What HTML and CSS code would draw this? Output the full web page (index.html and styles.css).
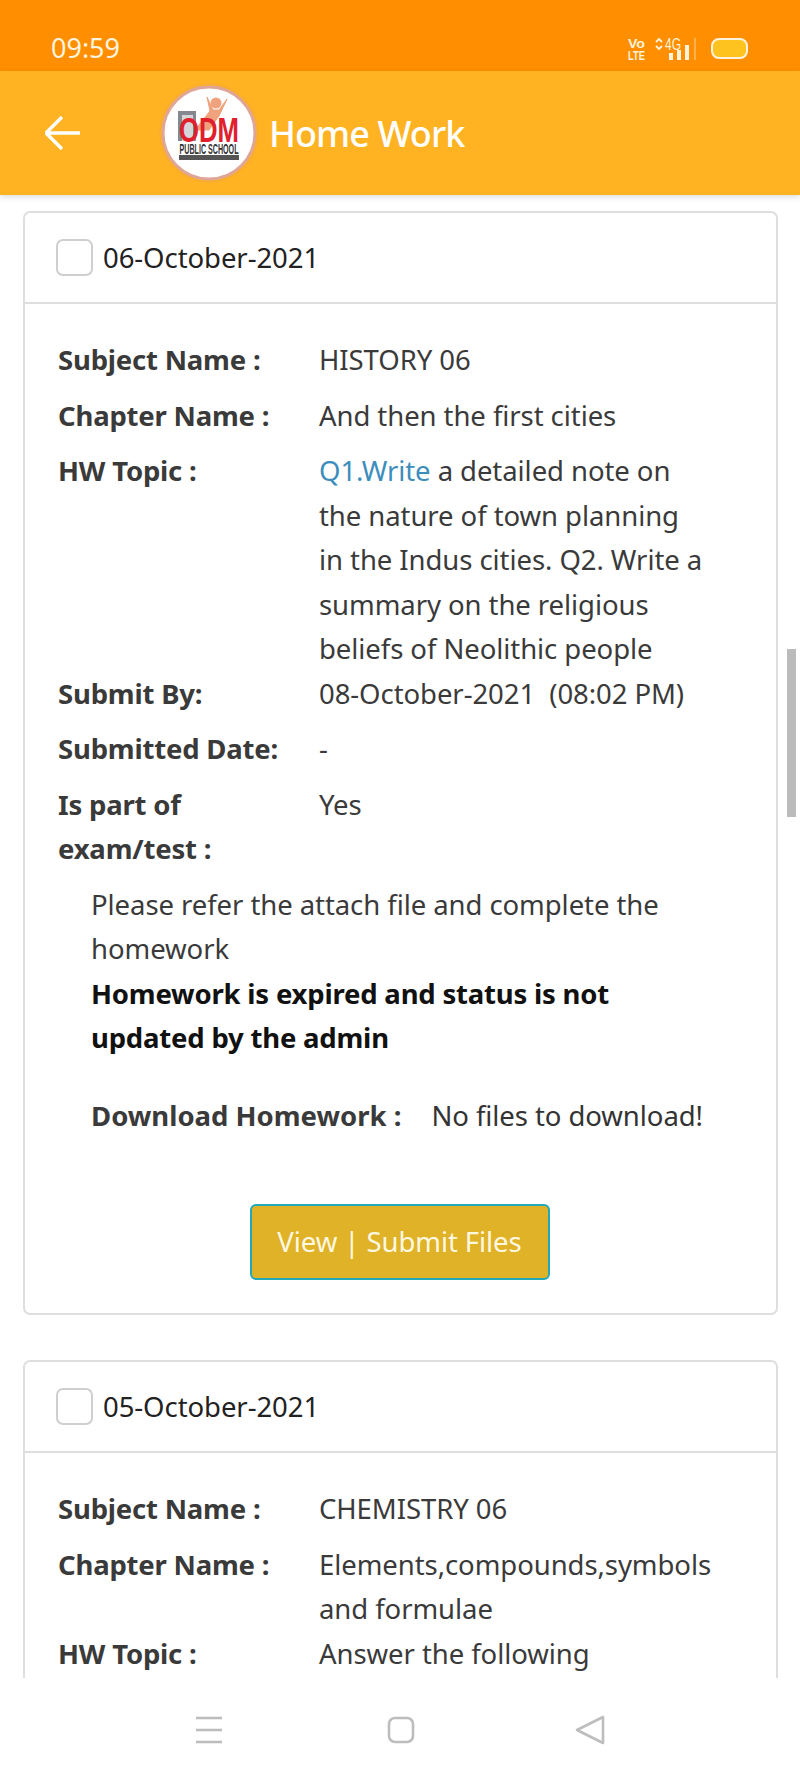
FILE: index.html
```html
<!DOCTYPE html>
<html lang="en">
<head>
<meta charset="utf-8">
<title>Home Work</title>
<link rel="stylesheet" href="styles.css">
</head>
<body>
<div class="phone">
  <div class="status">
    <span class="time">09:59</span>
    <svg class="status-icons" width="120" height="30" viewBox="0 0 120 30" aria-hidden="true">
      <text x="0" y="13" class="si-vo" textLength="17" lengthAdjust="spacingAndGlyphs">Vo</text>
      <text x="0" y="25" class="si-vo" textLength="17" lengthAdjust="spacingAndGlyphs">LTE</text>
      <path d="M28 7l3-3 3 3M28 11l3 3 3-3" fill="none" stroke="#fff3dd" stroke-width="1.8"/>
      <text x="37" y="15" class="si-4g" textLength="16" lengthAdjust="spacingAndGlyphs">4G</text>
      <rect x="41" y="18" width="4" height="7" fill="#fff3dd"/>
      <rect x="49" y="15" width="4" height="10" fill="#fff3dd"/>
      <rect x="57" y="10" width="4" height="15" fill="#fff3dd"/>
      <rect x="66" y="3" width="2" height="22" fill="#ffb04a"/>
      <rect x="84" y="4" width="35" height="19" rx="7" fill="#ffc31f" stroke="#fff3dd" stroke-width="2"/>
    </svg>
  </div>
  <header class="appbar">
    <svg class="back" width="36" height="36" viewBox="0 0 36 36" aria-hidden="true">
      <path d="M1 18H35M17 2L1 18L17 34" fill="none" stroke="#fff" stroke-width="3.4"/>
    </svg>
    <svg class="logo" width="100" height="100" viewBox="0 0 100 100" aria-hidden="true">
      <circle cx="50" cy="50" r="49" fill="none" stroke="#f5a93a" stroke-width="1"/>
      <circle cx="50" cy="50" r="46" fill="#fff" stroke="#dfa596" stroke-width="3"/>
      <rect x="19" y="28" width="18" height="30" fill="#85888f"/>
      <rect x="23" y="32" width="11" height="26" fill="#d5d6d8"/>
      <circle cx="57" cy="20" r="5.5" fill="#efa27c"/>
      <path d="M48 14L51 28L36 47H50L60 33L68 16L60 27H54Z" fill="#efa27c" stroke="#efa27c" stroke-width="1"/>
      <text x="50" y="59" class="logo-odm" textLength="60" lengthAdjust="spacingAndGlyphs">ODM</text>
      <text x="50" y="71" class="logo-pub" textLength="59" lengthAdjust="spacingAndGlyphs">PUBLIC SCHOOL</text>
      <rect x="20" y="72" width="60" height="5" fill="#555"/>
    </svg>
    <h1 class="title">Home Work</h1>
  </header>
  <main class="content">
    <section class="card">
      <div class="card-head"><span class="check"></span><span class="date">06-October-2021</span></div>
      <div class="card-body">
        <div class="row"><div class="label">Subject Name :</div><div class="value">HISTORY 06</div></div>
        <div class="row"><div class="label">Chapter Name :</div><div class="value">And then the first cities</div></div>
        <div class="row tight"><div class="label">HW Topic :</div><div class="value"><span class="link">Q1.Write</span> a detailed note on<br>the nature of town planning<br>in the Indus cities. Q2. Write a<br>summary on the religious<br>beliefs of Neolithic people</div></div>
        <div class="row"><div class="label">Submit By:</div><div class="value">08-October-2021&nbsp; (08:02 PM)</div></div>
        <div class="row"><div class="label">Submitted Date:</div><div class="value">-</div></div>
        <div class="row"><div class="label">Is part of<br>exam/test :</div><div class="value">Yes</div></div>
        <div class="note">
          <p class="note-text">Please refer the attach file and complete the<br>homework</p>
          <p class="note-strong">Homework is expired and status is not<br>updated by the admin</p>
          <p class="download"><span class="download-label">Download Homework :</span><span>No files to download!</span></p>
        </div>
        <div class="actions"><button class="btn" type="button">View | Submit Files</button></div>
      </div>
    </section>
    <section class="card">
      <div class="card-head"><span class="check"></span><span class="date">05-October-2021</span></div>
      <div class="card-body">
        <div class="row"><div class="label">Subject Name :</div><div class="value">CHEMISTRY 06</div></div>
        <div class="row tight"><div class="label">Chapter Name :</div><div class="value">Elements,compounds,symbols<br>and formulae</div></div>
        <div class="row"><div class="label">HW Topic :</div><div class="value">Answer the following</div></div>
      </div>
    </section>
  </main>
  <div class="scrollbar"></div>
  <nav class="navbar">
    <svg width="30" height="30" viewBox="0 0 30 30" class="nav-menu" aria-hidden="true"><path d="M2 3H28M2 15H28M2 27H28" stroke="#bdbdbd" stroke-width="2.6" fill="none"/></svg>
    <svg width="30" height="30" viewBox="0 0 30 30" class="nav-home" aria-hidden="true"><rect x="3" y="3" width="24" height="24" rx="6" stroke="#bdbdbd" stroke-width="2.6" fill="none"/></svg>
    <svg width="30" height="30" viewBox="0 0 30 30" class="nav-back" aria-hidden="true"><path d="M28 2V28L2 15Z" stroke="#bdbdbd" stroke-width="2.6" stroke-linejoin="round" fill="none"/></svg>
  </nav>
</div>
</body>
</html>
```
FILE: styles.css
```css
* { box-sizing: border-box; }
html, body { margin: 0; padding: 0; }
body { background: #fff; font-family: "Noto Sans", "Open Sans", sans-serif; color: #333; }
.phone { position: relative; width: 800px; height: 1778px; display: flex; flex-direction: column; overflow: hidden; background: #fff; }

.status { height: 71px; flex: none; background: #ff8f00; display: flex; align-items: center; justify-content: space-between; padding: 0 52px 0 51px; }
.time { font-size: 27px; color: #fff3dd; margin-top: 24px; line-height: 1; }
.status-icons { margin-top: 29px; }
.si-vo { font: 700 13px "Liberation Sans", sans-serif; fill: #fff3dd; }
.si-4g { font: 400 16px "Liberation Sans", sans-serif; fill: #fff3dd; }

.appbar { height: 124px; flex: none; background: #ffb322; display: flex; align-items: center; padding-left: 45px; box-shadow: 0 2px 6px rgba(0,0,0,.14); position: relative; z-index: 2; }
.back { flex: none; }
.logo { flex: none; margin-left: 78px; }
.logo-odm { font: 700 35px "Liberation Sans", sans-serif; fill: #e0202c; text-anchor: middle; }
.logo-pub { font: 700 14px "Liberation Sans", sans-serif; fill: #333; text-anchor: middle; }
.title { margin: 0 0 0 10px; font-size: 36px; font-weight: 500; color: #fff; letter-spacing: -.9px; }

.content { flex: 1; min-height: 0; overflow: hidden; padding: 16px 22px 0 23px; }
.card { border: 2px solid #dedede; border-radius: 7px; background: #fff; margin-bottom: 45px; }
.card-head { height: 91px; border-bottom: 2px solid #dedede; display: flex; align-items: center; padding-left: 31px; }
.check { width: 37px; height: 37px; border: 2px solid #cfcfcf; border-radius: 7px; margin-right: 10px; flex: none; }
.date { font-size: 27.5px; letter-spacing: -.07px; color: #222; }
.card-body { padding: 34px 35px 33px 33px; font-size: 27.5px; line-height: 44.5px; letter-spacing: -.07px; }
.row { display: grid; grid-template-columns: 261px 1fr; margin-bottom: 11px; }
.row.tight { margin-bottom: 0; }
.label { font-weight: 700; color: #3a3a3a; letter-spacing: -.2px; }
.value { color: #3a3a3a; white-space: nowrap; }
.link { color: #3c8dbc; }
.note { padding-left: 33px; }
.note p { margin: 0; }
.note-text { color: #3a3a3a; }
.note-strong { font-weight: 700; color: #111; letter-spacing: -.2px; }
.download { margin-top: 33px !important; display: flex; gap: 30px; }
.download-label { font-weight: 700; color: #3a3a3a; letter-spacing: 0; }
.actions { display: flex; justify-content: center; margin-top: 66px; }
.btn { width: 300px; height: 76px; background: #e0b228; border: 2px solid #21a9b8; border-radius: 6px; color: #fff8e0; font: inherit; letter-spacing: -.07px; padding: 0; }

.scrollbar { position: absolute; left: 787px; top: 649px; width: 9px; height: 168px; background: #bbb; z-index: 3; }
.navbar { height: 100px; flex: none; background: #fff; position: relative; z-index: 2; display: flex; align-items: flex-start; padding-top: 37px; }
.nav-menu { margin-left: 194px; }
.nav-home { margin-left: 162px; }
.nav-back { margin-left: 159px; }
```
